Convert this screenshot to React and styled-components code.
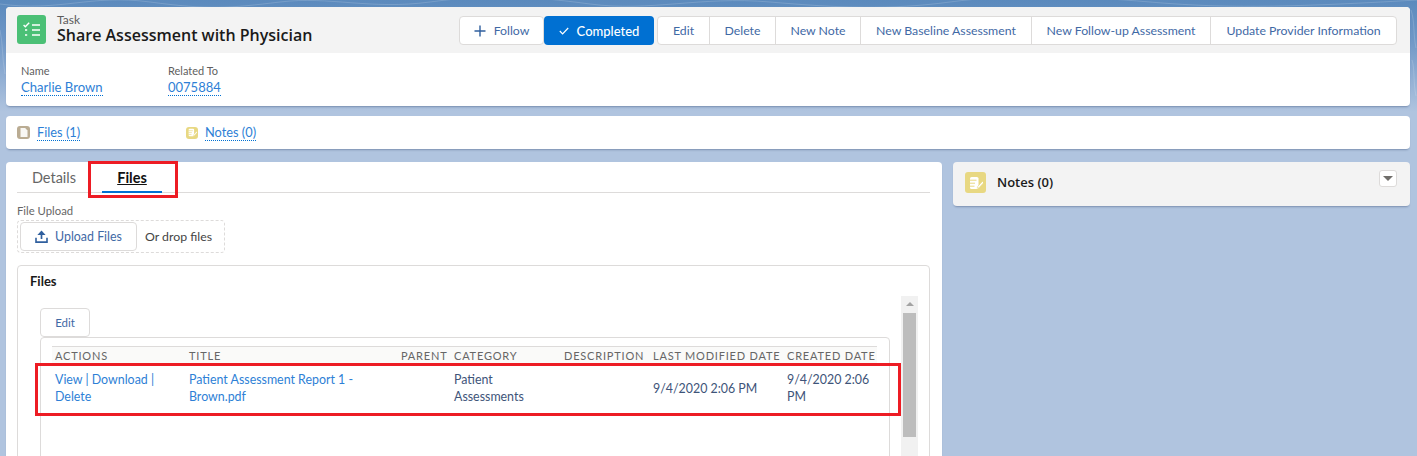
import React from "react";
import styled, { createGlobalStyle } from "styled-components";

const Global = createGlobalStyle`
  html, body { margin: 0; padding: 0; }
  body {
    font-family: Lato, "Open Sans", Arial, sans-serif;
    font-size: 13px;
    color: #16325c;
    background: #b0c4df;
  }
  * { box-sizing: border-box; }
`;

const Page = styled.div`
  position: relative;
  width: 1417px;
  height: 456px;
  overflow: hidden;
  padding: 7px 7px 0 6px;
  background: linear-gradient(180deg, #5b8abd 0, #6f97c6 40px, #b0c4df 112px);
`;

const Swirls = styled.svg`
  position: absolute;
  left: 0;
  top: 0;
  width: 1417px;
  height: 110px;
  pointer-events: none;
`;

const Card = styled.div`
  position: relative;
  background: #fff;
  border-radius: 4px;
  box-shadow: 0 2px 2px -1px rgba(60, 80, 120, 0.45);
`;

const HeaderTop = styled.div`
  display: flex;
  align-items: flex-start;
  justify-content: space-between;
  height: 46px;
  padding: 8px 13px 0 11px;
  background: #f3f3f3;
  border-radius: 4px 4px 0 0;
`;

const TitleWrap = styled.div`
  display: flex;
  gap: 11px;
`;

const TaskIcon = styled.div`
  width: 29px;
  height: 29px;
  border-radius: 3px;
  background: #4bc076;
  display: flex;
  align-items: center;
  justify-content: center;
`;

const Crumb = styled.div`
  font-size: 12px;
  line-height: 12px;
  color: #5c5c5c;
  margin-top: -1px;
`;

const Title = styled.div`
  font-family: "Open Sans", Arial, sans-serif;
  font-size: 16px;
  line-height: 18px;
  font-weight: 600;
  color: #1a1a1a;
  white-space: nowrap;
`;

const Actions = styled.div`
  display: flex;
  margin-top: 1px;
`;

const ButtonGroup = styled.div`
  display: flex;
  height: 29px;
  margin-left: ${(p) => p.$gap || 0}px;
  background: #fff;
  border: 1px solid #dddbda;
  border-radius: 4px;
`;

const ActionButton = styled.div`
  width: ${(p) => p.$w}px;
  display: flex;
  align-items: center;
  justify-content: center;
  gap: 8px;
  font-size: 12.3px;
  color: #3f69a5;
  white-space: nowrap;
  border-left: ${(p) => (p.$first ? "none" : "1px solid #dddbda")};
`;

const PrimaryButton = styled.div`
  width: 110px;
  height: 29px;
  display: flex;
  align-items: center;
  justify-content: center;
  gap: 8px;
  font-size: 13px;
  font-weight: 500;
  color: #fff;
  background: #0070d2;
  border-radius: 4px;
`;

const Fields = styled.div`
  display: flex;
  height: 53px;
  padding: 11px 15px 0;
`;

const Field = styled.div`
  width: ${(p) => p.$w}px;
`;

const FieldLabel = styled.div`
  font-size: 11px;
  line-height: 14px;
  color: #5f5f5f;
`;

const DottedLink = styled.span`
  display: inline-block;
  font-size: ${(p) => p.$size || 13}px;
  line-height: 16px;
  color: #2e7fd6;
  border-bottom: 1px dotted #0070d2;
`;

const FieldValue = styled.div`
  margin-top: 1px;
`;

const RelatedCard = styled(Card)`
  display: flex;
  align-items: center;
  height: 33px;
  margin-top: 10px;
  padding: 0 11px;
`;

const RelatedItem = styled.div`
  display: flex;
  align-items: center;
  gap: 7px;
  width: ${(p) => p.$w}px;
`;

const MiniIcon = styled.div`
  width: ${(p) => p.$s}px;
  height: ${(p) => p.$s}px;
  border-radius: 3px;
  background: ${(p) => p.$bg};
  display: flex;
  align-items: center;
  justify-content: center;
  flex: none;
`;

const Columns = styled.div`
  display: flex;
  gap: 11px;
  margin-top: 13px;
`;

const MainCard = styled(Card)`
  width: 936px;
  height: 320px;
  padding: 0 12px 0 11px;
`;

const Tabs = styled.div`
  display: flex;
  height: 31px;
  border-bottom: 1px solid #dddbda;
`;

const Tab = styled.div`
  position: relative;
  width: ${(p) => p.$w}px;
  padding-top: 7px;
  text-align: center;
  font-size: 14.5px;
  line-height: 18px;
  font-weight: ${(p) => (p.$active ? 700 : 400)};
  color: ${(p) => (p.$active ? "#111" : "#666")};
  text-decoration: ${(p) => (p.$active ? "underline" : "none")};
  margin-left: ${(p) => p.$ml || 0}px;
  ${(p) =>
    p.$active &&
    `&::after {
      content: "";
      position: absolute;
      left: 0;
      right: 0;
      bottom: -1px;
      height: 2px;
      background: #0070d2;
    }`}
`;

const UploadLabel = styled.div`
  font-size: 11.3px;
  line-height: 14px;
  color: #666;
  margin-top: 11px;
`;

const DropZone = styled.div`
  display: flex;
  align-items: center;
  gap: 8px;
  width: 208px;
  height: 33px;
  margin-top: 2px;
  padding-left: 2px;
  border: 1px dashed #dddbda;
  border-radius: 4px;
`;

const UploadButton = styled.div`
  width: 117px;
  height: 29px;
  display: flex;
  align-items: center;
  justify-content: center;
  gap: 7px;
  font-size: 12.4px;
  color: #3f69a5;
  border: 1px solid #dddbda;
  border-radius: 4px;
`;

const DropText = styled.span`
  font-size: 12.3px;
  color: #444;
`;

const FilesCard = styled.div`
  position: relative;
  height: 200px;
  margin-top: 12px;
  padding: 7px 12px;
  border: 1px solid #dddbda;
  border-radius: 4px;
`;

const FilesTitle = styled.div`
  font-size: 13px;
  line-height: 17px;
  font-weight: 700;
  color: #1a1a1a;
`;

const EditButton = styled.div`
  width: 50px;
  height: 29px;
  margin: 18px 0 0 10px;
  display: flex;
  align-items: center;
  justify-content: center;
  font-size: 11.5px;
  color: #3f69a5;
  border: 1px solid #dddbda;
  border-radius: 4px;
`;

const TableBox = styled.div`
  width: 850px;
  height: 140px;
  margin-left: 10px;
  padding: 8px 11px;
  background: #fff;
  border: 1px solid #dddbda;
  border-radius: 4px;
`;

const Row = styled.div`
  display: grid;
  grid-template-columns: 134px 212px 53px 110px 89px 134px 90px;
  padding-left: 3px;
  width: 825px;
`;

const HeadRow = styled(Row)`
  height: 20px;
  align-items: center;
  padding-bottom: 2px;
  background: #fafaf9;
  border-top: 1px solid #dddbda;
  border-bottom: 1px solid #dddbda;
`;

const HeadCell = styled.div`
  font-size: 11px;
  letter-spacing: 0.8px;
  color: #666;
  white-space: nowrap;
`;

const BodyRow = styled(Row)`
  align-items: center;
  height: 44px;
`;

const BodyCell = styled.div`
  font-size: 12.4px;
  line-height: 17px;
  color: ${(p) => (p.$link ? "#2e7fd6" : "#3e5479")};
`;

const Scrollbar = styled.div`
  position: absolute;
  left: 883px;
  top: 30px;
  width: 17px;
  bottom: 0;
  background: #f1f1f1;
  display: flex;
  flex-direction: column;
  align-items: center;
`;

const ScrollArrow = styled.div`
  width: 0;
  height: 0;
  margin-top: 6px;
  border-left: 4px solid transparent;
  border-right: 4px solid transparent;
  border-bottom: 4px solid #a3a3a3;
`;

const ScrollThumb = styled.div`
  width: 13px;
  height: 124px;
  margin-top: 7px;
  background: #bdbdbd;
`;

const NotesCard = styled(Card)`
  display: flex;
  align-items: flex-start;
  gap: 11px;
  width: 457px;
  height: 44px;
  padding: 10px 13px 0 12px;
  background: #f3f3f3;
`;

const NotesTitle = styled.div`
  flex: 1;
  font-family: "Open Sans", Arial, sans-serif;
  font-size: 13px;
  line-height: 21px;
  font-weight: 600;
  color: #1a1a1a;
`;

const MenuButton = styled.div`
  width: 18px;
  height: 17px;
  margin-top: -2px;
  display: flex;
  align-items: center;
  justify-content: center;
  background: #fff;
  border: 1px solid #dddbda;
  border-radius: 3px;
`;

const MenuCaret = styled.div`
  width: 0;
  height: 0;
  border-left: 5px solid transparent;
  border-right: 5px solid transparent;
  border-top: 5px solid #706e6b;
`;

const Highlight = styled.div`
  position: absolute;
  left: ${(p) => p.$x}px;
  top: ${(p) => p.$y}px;
  width: ${(p) => p.$w}px;
  height: ${(p) => p.$h}px;
  border: 3px solid #ed1c24;
  pointer-events: none;
`;

const PlusIcon = () => (
  <svg width="12" height="12" viewBox="0 0 12 12">
    <path d="M6 .5v11M.5 6h11" stroke="#2f5f9e" strokeWidth="1.4" fill="none" />
  </svg>
);

const CheckIcon = () => (
  <svg width="10" height="8" viewBox="0 0 10 8">
    <path d="M.8 4l2.8 2.8L9.2 1" stroke="#fff" strokeWidth="1.2" fill="none" />
  </svg>
);

const TaskGlyph = () => (
  <svg width="17" height="15" viewBox="0 0 17 15" fill="none" stroke="#fff">
    <path d="M.6 3l1.7 1.7L6.2.8" strokeWidth="1.4" />
    <path d="M9 3h8M9 8h8M9 13h8" strokeWidth="1.7" />
    <path d="M2 8h2.2M2 13h2.2" strokeWidth="1.7" />
  </svg>
);

const FileGlyph = () => (
  <svg width="8" height="9" viewBox="0 0 8 9">
    <path d="M.5 0h4.6L7.5 2.6V9H.5z" fill="#fff" opacity="0.9" />
  </svg>
);

const NoteGlyph = ({ size }) => (
  <svg width={size} height={size} viewBox="0 0 14 14" fill="none">
    <rect x="1" y="1" width="8.5" height="12" rx="1.6" fill="#fff" />
    <path d="M.5 4.2h7M.5 7.2h5.5M.5 10.2h5" stroke="#e8d882" strokeWidth="1" />
    <path d="M13.6 5.2L8.8 10.4l-.7 1.9 2-.6 4.7-5.2z" fill="#fff" stroke="#e8d882" strokeWidth=".6" />
  </svg>
);

const UploadGlyph = () => (
  <svg width="13" height="13" viewBox="0 0 13 13" fill="none">
    <path d="M6.5.4L10.6 5H2.4z" fill="#2f5f9e" />
    <path d="M6.5 4v5" stroke="#2f5f9e" strokeWidth="1.7" />
    <path d="M1 7.8v4.3h11V7.8" stroke="#2f5f9e" strokeWidth="1.6" />
  </svg>
);

const ACTIONS = [
  { label: "Edit", w: 51 },
  { label: "Delete", w: 66 },
  { label: "New Note", w: 85 },
  { label: "New Baseline Assessment", w: 171 },
  { label: "New Follow-up Assessment", w: 179 },
  { label: "Update Provider Information", w: 186 },
];

const HEADERS = ["ACTIONS", "TITLE", "PARENT", "CATEGORY", "DESCRIPTION", "LAST MODIFIED DATE", "CREATED DATE"];

export default function App() {
  return (
    <Page>
      <Global />
      <Swirls viewBox="0 0 1417 110" fill="none" stroke="#fff" strokeOpacity="0.16">
        <path d="M0 4c60 8 90-10 150-2s80 6 130 0 90 8 150 0 100-6 160 2 110-8 180-2 120 8 180 0 130-6 200 0 130 6 267-2" />
        <path d="M1411 10c4 12 2 24 5 38M1412 60c3 10 1 22 4 36M0 30c3 14 2 28 5 44" />
      </Swirls>

      <Card>
        <HeaderTop>
          <TitleWrap>
            <TaskIcon>
              <TaskGlyph />
            </TaskIcon>
            <div>
              <Crumb>Task</Crumb>
              <Title>Share Assessment with Physician</Title>
            </div>
          </TitleWrap>
          <Actions>
            <ButtonGroup>
              <ActionButton $w={83} $first>
                <PlusIcon />
                Follow
              </ActionButton>
            </ButtonGroup>
            <PrimaryButton>
              <CheckIcon />
              Completed
            </PrimaryButton>
            <ButtonGroup $gap={3}>
              {ACTIONS.map((a, i) => (
                <ActionButton key={a.label} $w={a.w} $first={i === 0}>
                  {a.label}
                </ActionButton>
              ))}
            </ButtonGroup>
          </Actions>
        </HeaderTop>
        <Fields>
          <Field $w={147}>
            <FieldLabel>Name</FieldLabel>
            <FieldValue>
              <DottedLink $size={13.1}>Charlie Brown</DottedLink>
            </FieldValue>
          </Field>
          <Field $w={147}>
            <FieldLabel>Related To</FieldLabel>
            <FieldValue>
              <DottedLink>0075884</DottedLink>
            </FieldValue>
          </Field>
        </Fields>
      </Card>

      <RelatedCard>
        <RelatedItem $w={169}>
          <MiniIcon $s={13} $bg="#baac93">
            <FileGlyph />
          </MiniIcon>
          <DottedLink $size={12.8}>Files (1)</DottedLink>
        </RelatedItem>
        <RelatedItem $w={120}>
          <MiniIcon $s={12} $bg="#e8d882">
            <NoteGlyph size={9} />
          </MiniIcon>
          <DottedLink $size={12.8}>Notes (0)</DottedLink>
        </RelatedItem>
      </RelatedCard>

      <Columns>
        <MainCard>
          <Tabs>
            <Tab $w={60} $ml={7}>Details</Tab>
            <Tab $w={60} $ml={18} $active>Files</Tab>
          </Tabs>
          <UploadLabel>File Upload</UploadLabel>
          <DropZone>
            <UploadButton>
              <UploadGlyph />
              Upload Files
            </UploadButton>
            <DropText>Or drop files</DropText>
          </DropZone>
          <FilesCard>
            <FilesTitle>Files</FilesTitle>
            <EditButton>Edit</EditButton>
            <TableBox>
              <HeadRow>
                {HEADERS.map((h) => (
                  <HeadCell key={h}>{h}</HeadCell>
                ))}
              </HeadRow>
              <BodyRow>
                <BodyCell $link>View | Download | Delete</BodyCell>
                <BodyCell $link>Patient Assessment Report 1 - Brown.pdf</BodyCell>
                <BodyCell />
                <BodyCell>Patient Assessments</BodyCell>
                <BodyCell />
                <BodyCell>9/4/2020 2:06 PM</BodyCell>
                <BodyCell>9/4/2020 2:06 PM</BodyCell>
              </BodyRow>
            </TableBox>
            <Scrollbar>
              <ScrollArrow />
              <ScrollThumb />
            </Scrollbar>
          </FilesCard>
        </MainCard>
        <NotesCard>
          <MiniIcon $s={21} $bg="#e8d882">
            <NoteGlyph size={14} />
          </MiniIcon>
          <NotesTitle>Notes (0)</NotesTitle>
          <MenuButton>
            <MenuCaret />
          </MenuButton>
        </NotesCard>
      </Columns>

      <Highlight $x={88} $y={161} $w={90} $h={37} />
      <Highlight $x={35} $y={363} $w={866} $h={53} />
    </Page>
  );
}
